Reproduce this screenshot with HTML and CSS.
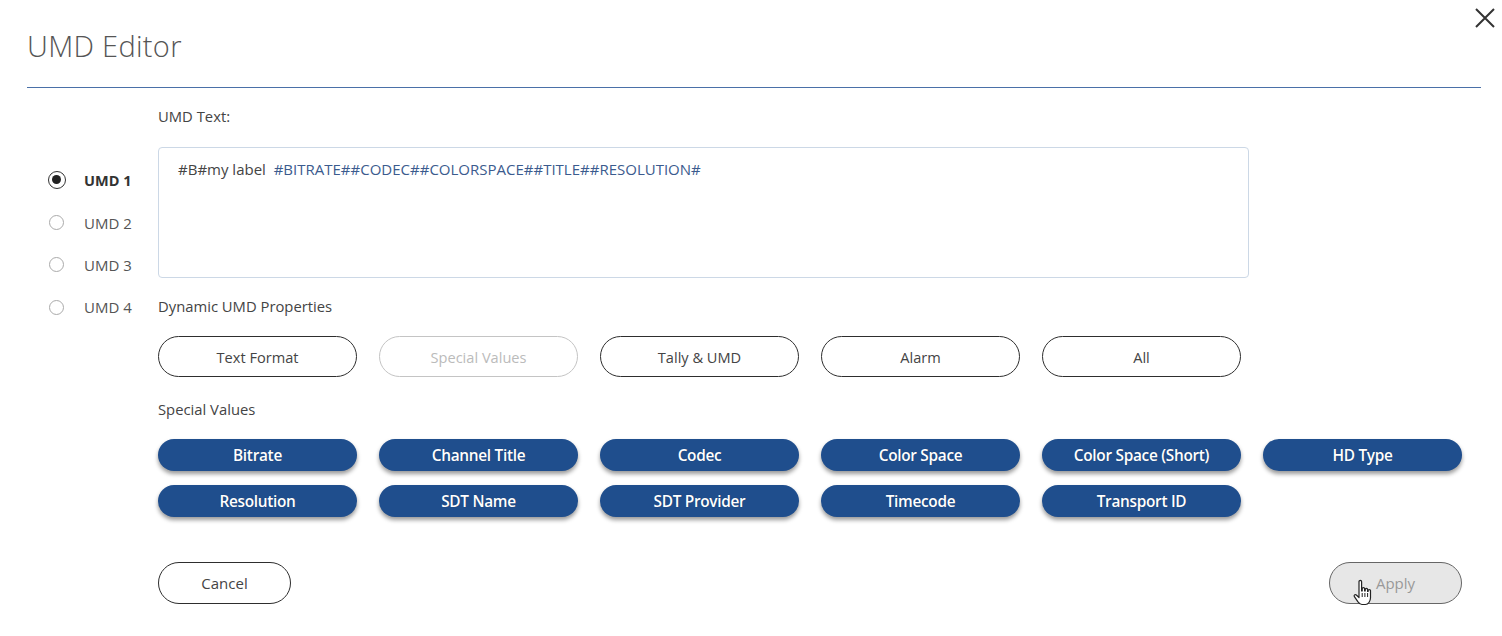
FILE: index.html
```html
<!DOCTYPE html>
<html>
<head>
<meta charset="utf-8">
<link rel="stylesheet" href="styles.css">
</head>
<body>
<div class="dialog">
  <header class="head">
    <h1 class="title">UMD Editor</h1>
    <button class="close" aria-label="Close">
      <svg width="22" height="22" viewBox="0 0 22 22"><path d="M2 2 L20 20 M20 2 L2 20" stroke="#333" stroke-width="2" fill="none"/></svg>
    </button>
  </header>
  <div class="content">
    <ul class="umds">
      <li class="umd active"><span class="radio"></span><span>UMD 1</span></li>
      <li class="umd"><span class="radio"></span><span>UMD 2</span></li>
      <li class="umd"><span class="radio"></span><span>UMD 3</span></li>
      <li class="umd"><span class="radio"></span><span>UMD 4</span></li>
    </ul>
    <div class="main">
      <div class="label">UMD Text:</div>
      <div class="textbox"><span class="plain">#B#my label&nbsp;&nbsp;</span><span class="tok">#BITRATE##CODEC##COLORSPACE##TITLE##RESOLUTION#</span></div>
      <div class="label l2">Dynamic UMD Properties</div>
      <div class="tabs">
        <button class="outline">Text Format</button>
        <button class="outline disabled">Special Values</button>
        <button class="outline">Tally &amp; UMD</button>
        <button class="outline">Alarm</button>
        <button class="outline">All</button>
      </div>
      <div class="label l3">Special Values</div>
      <div class="pills">
        <button class="pill">Bitrate</button>
        <button class="pill">Channel Title</button>
        <button class="pill">Codec</button>
        <button class="pill">Color Space</button>
        <button class="pill">Color Space (Short)</button>
        <button class="pill">HD Type</button>
        <button class="pill">Resolution</button>
        <button class="pill">SDT Name</button>
        <button class="pill">SDT Provider</button>
        <button class="pill">Timecode</button>
        <button class="pill">Transport ID</button>
      </div>
      <div class="footer">
        <button class="outline small">Cancel</button>
        <div class="apply-wrap">
          <button class="outline small apply">Apply</button>
          <svg class="cursor" width="24" height="28" viewBox="0 0 24 28"><path d="M7 2.5c0-1.4 2.6-1.4 2.6 0V12h.6V9.6c0-1.3 2.4-1.3 2.4 0V12h.6v-1.6c0-1.3 2.4-1.3 2.4 0V12.4h.5v-.8c0-1.3 2.4-1.3 2.4 0v7.2c0 3.6-2.4 6.7-5 6.7H9.9c-1.8 0-2.9-1.2-3.9-2.6L2.4 17.6c-.9-1.3.7-2.7 1.9-1.6L7 18.5z" fill="#fff" stroke="#222" stroke-width="1.2" stroke-linejoin="round"/><path d="M10.2 14v4M12.9 14v4M15.6 14v4" stroke="#222" stroke-width="1"/></svg>
        </div>
      </div>
    </div>
  </div>
</div>
</body>
</html>
```
FILE: styles.css
```css
* { box-sizing: border-box; }
html, body { margin: 0; padding: 0; background: #fff; }
body { font-family: "Open Sans", "Noto Sans", "Liberation Sans", sans-serif; color: #444; }
button { font-family: inherit; cursor: pointer; }

.dialog { width: 1502px; height: 636px; padding: 0 20px 0 27px; }

.head {
  position: relative;
  height: 88px;
  border-bottom: 1px solid #4a70a8;
  margin-right: 1px;
}
.title {
  margin: 0;
  padding-top: 26px;
  font-size: 29px;
  line-height: 40px;
  font-weight: 300;
  color: #555;
  letter-spacing: 0.3px;
}
.close {
  position: absolute;
  right: -15px;
  top: 7px;
  border: 0;
  background: none;
  padding: 0;
  width: 22px;
  height: 22px;
}

.content { display: flex; }

.umds {
  list-style: none;
  margin: 0;
  padding: 71px 0 0 0;
  width: 131px;
  flex: none;
}
.umd {
  height: 42.4px;
  display: flex;
  align-items: center;
  gap: 20px;
  padding-left: 22px;
  font-size: 15px;
  color: #555;
}
.radio {
  width: 15px;
  height: 15px;
  border: 1px solid #aaa;
  border-radius: 50%;
  flex: none;
  position: relative;
}
.umd.active { font-weight: 700; color: #333; font-size: 14.5px; }
.umd.active .radio {
  width: 18px;
  height: 18px;
  margin-left: -1.5px;
  margin-right: -1.5px;
  border: 1.5px solid #333;
}
.umd.active .radio::after {
  content: "";
  position: absolute;
  left: 3px; top: 3px;
  width: 9px; height: 9px;
  border-radius: 50%;
  background: #222;
}

.main { flex: 1; padding-top: 18px; }

.label {
  font-size: 14.8px;
  line-height: 20px;
  color: #444;
}
.l2 { margin-top: 18px; }
.l3 { margin-top: 22px; }

.textbox {
  margin-top: 21px;
  width: 1091px;
  height: 131px;
  border: 1px solid #ccd8e6;
  border-radius: 4px;
  padding: 11px 19px;
  font-size: 15px;
  line-height: 20px;
}
.plain { color: #444; }
.tok { color: #3b5b8e; }

.tabs {
  margin-top: 20px;
  display: flex;
  gap: 22px;
}
.outline {
  width: 199px;
  height: 41px;
  border: 1px solid #2e2e2e;
  border-radius: 21px;
  background: #fff;
  font-size: 14.6px;
  color: #444;
  padding: 0;
}
.outline.disabled { border-color: #c4c4c4; color: #bbb; }

.pills {
  margin-top: 20px;
  display: grid;
  grid-template-columns: repeat(6, 199px);
  column-gap: 22px;
  row-gap: 14px;
}
.pill {
  height: 32px;
  border: 0;
  border-radius: 16px;
  background: #1f4e8d;
  color: #fff;
  font-size: 15.4px;
  font-weight: 600;
  letter-spacing: -0.3px;
  padding: 0;
  box-shadow: 0 3px 4px rgba(0, 0, 0, 0.4);
  text-shadow: 0 0 1px rgba(0,0,0,0.3);
}

.footer {
  margin-top: 45px;
  display: flex;
  justify-content: space-between;
  width: 1304px;
}
.outline.small { width: 133px; height: 42px; font-size: 15px; }
.apply-wrap { position: relative; }
.outline.apply { background: #e7e7e7; border-color: #666; color: #999; }
.cursor { position: absolute; left: 23px; top: 17px; }
```
